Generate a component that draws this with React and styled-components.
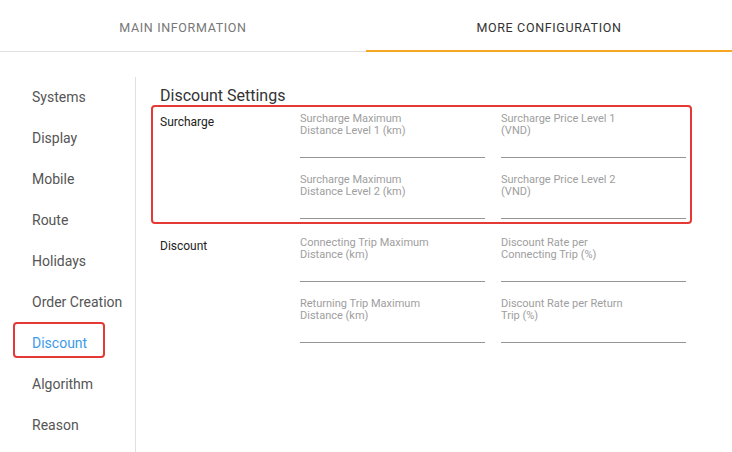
import React, { useState } from 'react';
import styled, { createGlobalStyle } from 'styled-components';

const GlobalStyle = createGlobalStyle`
  body {
    margin: 0;
    background: #fff;
    font-family: Roboto, "Liberation Sans", sans-serif;
  }
`;

const Page = styled.div`
  width: 732px;
  height: 452px;
  overflow: hidden;
  background: #fff;
`;

const TabBar = styled.div`
  display: flex;
  height: 51px;
  border-bottom: 1px solid #e0e0e0;
`;

const Tab = styled.div`
  flex: 1;
  display: flex;
  align-items: center;
  justify-content: center;
  font-size: 12.5px;
  font-weight: 400;
  letter-spacing: 0.65px;
  text-transform: uppercase;
  color: ${(p) => (p.$active ? '#333' : '#777')};
  box-shadow: ${(p) => (p.$active ? 'inset 0 -2px 0 #f5a623' : 'none')};
  margin-bottom: -1px;
  padding-top: 3px;
`;

const Body = styled.div`
  display: flex;
  margin-top: 25px;
  height: 375px;
`;

const Sidebar = styled.div`
  width: 135px;
  border-right: 1px solid #e0e0e0;
  display: flex;
  flex-direction: column;
`;

const NavItem = styled.div`
  position: relative;
  height: 41px;
  display: flex;
  align-items: center;
  padding-left: 32px;
  padding-bottom: 1px;
  box-sizing: border-box;
  font-size: 14px;
  color: ${(p) => (p.$active ? '#3d9be9' : '#555')};
`;

const Highlight = styled.div`
  position: absolute;
  left: ${(p) => p.$left}px;
  right: ${(p) => p.$right}px;
  top: ${(p) => p.$top}px;
  bottom: ${(p) => p.$bottom}px;
  border: 2px solid #e53935;
  border-radius: 4px;
  pointer-events: none;
`;

const Main = styled.div`
  flex: 1;
  padding: 9px 0 0 24px;
`;

const Title = styled.h2`
  margin: 0 0 7px;
  font-size: 16px;
  line-height: 20px;
  font-weight: 400;
  color: #333;
`;

const Section = styled.div`
  position: relative;
  display: grid;
  grid-template-columns: 124px 185px 185px;
  column-gap: 16px;
  row-gap: 16px;
  width: 526px;
  margin-bottom: 18px;
`;

const SectionLabel = styled.div`
  grid-row: span 2;
  font-size: 12px;
  line-height: 16px;
  font-weight: 400;
  color: #222;
  margin-top: 1px;
`;

const Field = styled.div`
  display: flex;
  flex-direction: column;
  height: 45px;
  border-bottom: 1px solid #949494;
  box-sizing: border-box;
`;

const FieldLabel = styled.label`
  font-size: 11px;
  line-height: 12px;
  color: #9e9e9e;
`;

const sections = [
  {
    name: 'Surcharge',
    marked: true,
    fields: [
      ['Surcharge Maximum', 'Distance Level 1 (km)'],
      ['Surcharge Price Level 1', '(VND)'],
      ['Surcharge Maximum', 'Distance Level 2 (km)'],
      ['Surcharge Price Level 2', '(VND)'],
    ],
  },
  {
    name: 'Discount',
    fields: [
      ['Connecting Trip Maximum', 'Distance (km)'],
      ['Discount Rate per', 'Connecting Trip (%)'],
      ['Returning Trip Maximum', 'Distance (km)'],
      ['Discount Rate per Return', 'Trip (%)'],
    ],
  },
];

const navItems = ['Systems', 'Display', 'Mobile', 'Route', 'Holidays', 'Order Creation', 'Discount', 'Algorithm', 'Reason'];

const App = () => {
  const [tab, setTab] = useState(1);
  const [active, setActive] = useState('Discount');

  return (
    <Page>
      <GlobalStyle />
      <TabBar>
        <Tab $active={tab === 0} onClick={() => setTab(0)}>Main Information</Tab>
        <Tab $active={tab === 1} onClick={() => setTab(1)}>More Configuration</Tab>
      </TabBar>
      <Body>
        <Sidebar>
          {navItems.map((item) => (
            <NavItem key={item} $active={item === active} onClick={() => setActive(item)}>
              {item}
              {item === active && <Highlight $left={13} $right={30} $top={-1} $bottom={6} />}
            </NavItem>
          ))}
        </Sidebar>
        <Main>
          <Title>Discount Settings</Title>
          {sections.map((s) => (
            <Section key={s.name}>
              <SectionLabel>{s.name}</SectionLabel>
              {s.fields.map(([a, b], i) => (
                <Field key={i}>
                  <FieldLabel>{a}<br />{b}</FieldLabel>
                </Field>
              ))}
              {s.marked && <Highlight $left={-9} $right={-6} $top={-8} $bottom={-5} />}
            </Section>
          ))}
        </Main>
      </Body>
    </Page>
  );
};

export default App;
